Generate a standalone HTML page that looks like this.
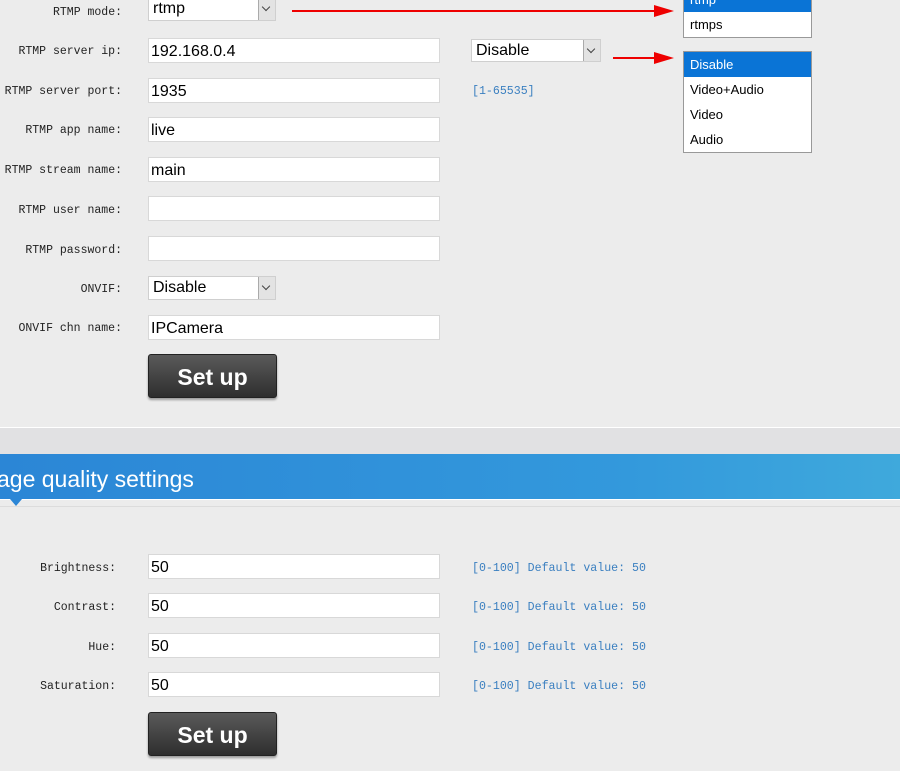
<!DOCTYPE html>
<html><head><meta charset="utf-8"><style>
body{margin:0;width:900px;height:771px;background:#ececec;position:relative;overflow:hidden;font-family:"Liberation Sans",sans-serif}
.l{position:absolute;right:778px;font:11.5px "Liberation Mono",monospace;color:#222;white-space:nowrap}
.i{position:absolute;left:148px;width:292px;height:25px;background:#fff;border:1px solid #d8d8d8;font-size:16px;line-height:25px;padding-left:2px;box-sizing:border-box;color:#000}
.s{position:absolute;background:#fff;border:1px solid #cfcfcf;box-sizing:border-box;font-size:16px;line-height:22px;padding-left:4px}
.s b{position:absolute;right:0;top:0;bottom:0;width:16px;background:#e3e3e3;border-left:1px solid #aaa;font-weight:normal}
.s b:after{content:"";position:absolute;left:4px;top:6px;width:5px;height:5px;border-right:1px solid #444;border-bottom:1px solid #444;transform:rotate(45deg)}
.h{position:absolute;left:472px;font:11.6px "Liberation Mono",monospace;color:#3a7fc0}
.btn{position:absolute;left:148px;width:129px;height:44px;border-radius:3px;background:linear-gradient(#5a5a5a,#2e2e2e);box-shadow:0 2px 2px rgba(0,0,0,.35);color:#fff;font-weight:bold;font-size:23px;text-align:center;line-height:44px;border:1px solid #222;box-sizing:border-box}
.dd{position:absolute;left:683px;width:129px;background:#fff;border:1px solid #999;box-sizing:border-box;font-size:13px}
.dd div{height:25px;line-height:25px;padding-left:6px}
.dd .sel{background:#0a74d6;color:#fff}
</style></head><body>
<div class="l" style="top:6px">RTMP mode:</div>
<div class="s" style="left:148px;top:-3px;width:128px;height:24px">rtmp<b></b></div>
<div class="l" style="top:45px">RTMP server ip:</div>
<div class="i" style="top:38px">192.168.0.4</div>
<div class="s" style="left:471px;top:39px;width:130px;height:23px">Disable<b></b></div>
<div class="l" style="top:85px">RTMP server port:</div>
<div class="i" style="top:78px">1935</div>
<div class="h" style="top:85px">[1-65535]</div>
<div class="l" style="top:124px">RTMP app name:</div>
<div class="i" style="top:117px">live</div>
<div class="l" style="top:164px">RTMP stream name:</div>
<div class="i" style="top:157px">main</div>
<div class="l" style="top:204px">RTMP user name:</div>
<div class="i" style="top:196px"></div>
<div class="l" style="top:244px">RTMP password:</div>
<div class="i" style="top:236px"></div>
<div class="l" style="top:283px">ONVIF:</div>
<div class="s" style="left:148px;top:276px;width:128px;height:24px">Disable<b></b></div>
<div class="l" style="top:322px">ONVIF chn name:</div>
<div class="i" style="top:315px">IPCamera</div>
<div class="btn" style="top:354px">Set up</div>

<svg style="position:absolute;left:0;top:0" width="900" height="80">
<line x1="292" y1="11" x2="656" y2="11" stroke="#e00" stroke-width="2"/>
<polygon points="654,5 674,11 654,17" fill="#e00"/>
<line x1="613" y1="58" x2="656" y2="58" stroke="#e00" stroke-width="2"/>
<polygon points="654,52 674,58 654,64" fill="#e00"/>
</svg>
<div class="dd" style="top:-14px"><div class="sel">rtmp</div><div>rtmps</div></div>
<div class="dd" style="top:51px"><div class="sel">Disable</div><div>Video+Audio</div><div>Video</div><div>Audio</div></div>

<div style="position:absolute;left:0;top:427px;width:900px;height:1px;background:#fff"></div>
<div style="position:absolute;left:0;top:428px;width:900px;height:26px;background:#e1e1e3"></div>
<div style="position:absolute;left:0;top:454px;width:900px;height:45px;background:linear-gradient(90deg,#2b86d6,#3399dc 70%,#3fa9dc);color:#fff;font-size:23px;line-height:50px;text-indent:-3px;white-space:nowrap">age quality settings</div>
<div style="position:absolute;left:0;top:499px;width:900px;height:1px;background:#fff"></div>
<div style="position:absolute;left:0;top:506px;width:900px;height:1px;background:#dcdcdc"></div>
<div style="position:absolute;left:10px;top:499px;width:0;height:0;border-left:6px solid transparent;border-right:6px solid transparent;border-top:7px solid #2b86d6"></div>

<div class="l" style="top:562px;right:784px">Brightness:</div>
<div class="i" style="top:554px">50</div><div class="h" style="top:562px">[0-100] Default value: 50</div>
<div class="l" style="top:601px;right:784px">Contrast:</div>
<div class="i" style="top:593px">50</div><div class="h" style="top:601px">[0-100] Default value: 50</div>
<div class="l" style="top:641px;right:784px">Hue:</div>
<div class="i" style="top:633px">50</div><div class="h" style="top:641px">[0-100] Default value: 50</div>
<div class="l" style="top:680px;right:784px">Saturation:</div>
<div class="i" style="top:672px">50</div><div class="h" style="top:680px">[0-100] Default value: 50</div>
<div class="btn" style="top:712px">Set up</div>
</body></html>
